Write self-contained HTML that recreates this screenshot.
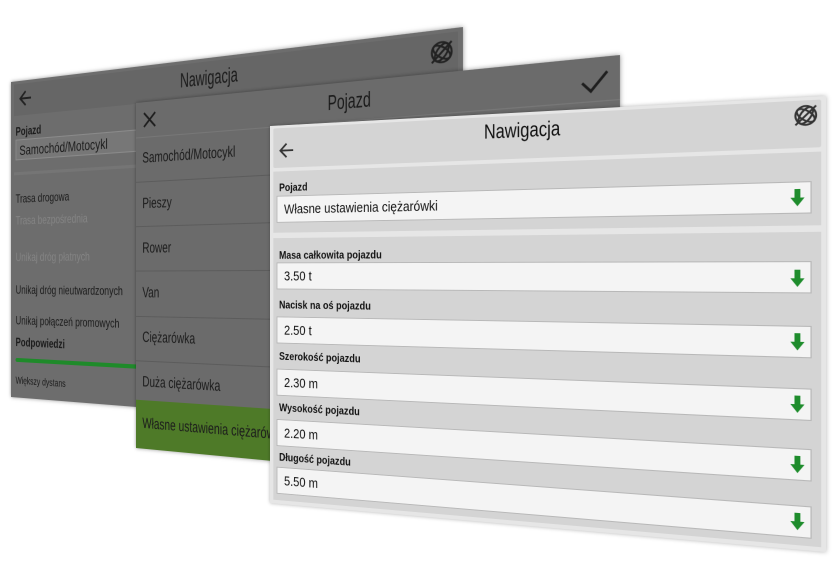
<!DOCTYPE html>
<html><head><meta charset="utf-8">
<style>
*{margin:0;padding:0;box-sizing:border-box}
html,body{width:838px;height:572px;background:#fff;overflow:hidden;font-family:"Liberation Sans",sans-serif}
.p{position:absolute;left:0;top:0;transform-origin:0 0;overflow:hidden}
.a{position:absolute;white-space:nowrap}
.c{transform:scaleX(.86);transform-origin:0 0}
.cc{transform:scaleX(.8);transform-origin:50% 0}
.s{display:inline-block;transform:scaleX(.88);transform-origin:0 0}
#p1{width:460px;height:320px;background:#6d6d6d;transform:matrix3d(0.75700,-0.132717,0,-0.00048726,0,0.984375,0,0,0,0,1,0,11,82,0,1);box-shadow:0 0 4px rgba(0,0,0,.4)}
#p2{width:480px;height:350px;background:#6b6b6b;transform:matrix3d(0.73175,-0.124542,0,-0.00044608,0,0.985714,0,0,0,0,1,0,136,103,0,1);box-shadow:0 0 4px rgba(0,0,0,.4)}
#p3{width:560px;height:420px;background:#e6e6e6;transform:matrix3d(0.73732,-0.083268,0,-0.00030938,0,0.897619,0,0,0,0,1,0,270,126,0,1);box-shadow:0 0 4px rgba(0,0,0,.3)}
.t1{font-size:12px;color:#1a1a1a;transform:scaleX(.85);transform-origin:0 0}
.dis{color:#858585}
.sep{position:absolute;left:0;right:0;height:1px;background:#5c5c5c}
.it{position:absolute;left:8px;font-size:15px;color:#1c1c1c;white-space:nowrap;transform:scaleX(.82);transform-origin:0 0}
.lab{position:absolute;left:11px;font-size:12px;font-weight:bold;color:#111;white-space:nowrap;transform:scaleX(.88);transform-origin:0 0}
.inp{position:absolute;left:8px;width:540px;height:30px;background:#f4f4f4;border:1px solid #b8b8b8;font-size:15px;color:#111;padding:6px 0 0 8px;white-space:nowrap}
.arr{position:absolute;left:530px;width:12px;height:16px}
</style></head><body>

<div id="p1" class="p">
  <div style="position:absolute;left:4px;right:4px;top:3px;height:32px;background:#666"></div>
  <svg class="a" style="left:10px;top:9px" width="18" height="18" viewBox="0 0 18 18"><path d="M16 9H3M9 2L2 9l7 7" stroke="#222" stroke-width="2" fill="none"/></svg>
  <div class="a" style="left:0;width:460px;text-align:center;top:8px;font-size:18px;color:#1a1a1a;transform:scaleX(.72);transform-origin:50% 0">Nawigacja</div>
  <svg class="a" style="left:432px;top:7px" width="22" height="22" viewBox="0 0 22 22"><g stroke="#222" stroke-width="1.6" fill="none"><circle cx="11" cy="11" r="8"/><ellipse cx="11" cy="11" rx="4" ry="8" transform="rotate(35 11 11)"/><ellipse cx="11" cy="11" rx="8" ry="4" transform="rotate(35 11 11)"/><path d="M3 19L19 3"/></g></svg>
  <div class="a t1" style="left:6px;top:44px;font-weight:bold">Pojazd</div>
  <div class="a" style="left:6px;top:59px;width:440px;height:21px;background:#777;border:1px solid #8a8a8a;font-size:14px;color:#1a1a1a;padding:2px 0 0 4px"><span class="s" style="transform:scaleX(.86)">Samochód/Motocykl</span></div>
  <div style="position:absolute;left:4px;right:4px;top:92px;height:3px;background:#757575"></div>
  <div class="a t1" style="left:6px;top:112px">Trasa drogowa</div>
  <div class="a t1 dis" style="left:6px;top:134px">Trasa bezpośrednia</div>
  <div class="a t1 dis" style="left:6px;top:171px">Unikaj dróg płatnych</div>
  <div class="a t1" style="left:6px;top:204px">Unikaj dróg nieutwardzonych</div>
  <div class="a t1" style="left:6px;top:235px">Unikaj połączeń promowych</div>
  <div class="a t1" style="left:6px;top:257px;font-weight:bold">Podpowiedzi</div>
  <div style="position:absolute;left:6px;width:420px;top:280px;height:4px;border-radius:2px;background:#1f8a2a"></div>
  <div class="a" style="left:6px;top:298px;font-size:10px;color:#1a1a1a;transform:scaleX(.85);transform-origin:0 0">Większy dystans</div>
</div>

<div id="p2" class="p">
  <svg class="a" style="left:8px;top:9px" width="18" height="18" viewBox="0 0 18 18"><path d="M2 2L16 16M16 2L2 16" stroke="#1e1e1e" stroke-width="2"/></svg>
  <div class="a" style="left:0;width:480px;text-align:center;top:8px;font-size:19px;color:#1a1a1a;transform:scaleX(.75);transform-origin:50% 0">Pojazd</div>
  <svg class="a" style="left:448px;top:10px" width="24" height="20" viewBox="0 0 24 20"><path d="M2 10l7 7L22 2" stroke="#1e1e1e" stroke-width="2.2" fill="none"/></svg>
  <div class="sep" style="top:35px;background:#777"></div>
  <div class="it" style="top:48px">Samochód/Motocykl</div>
  <div class="sep" style="top:80px"></div>
  <div class="it" style="top:94px">Pieszy</div>
  <div class="sep" style="top:125px"></div>
  <div class="it" style="top:139px">Rower</div>
  <div class="sep" style="top:170px"></div>
  <div class="it" style="top:184px">Van</div>
  <div class="sep" style="top:216px"></div>
  <div class="it" style="top:229px">Ciężarówka</div>
  <div class="sep" style="top:261px"></div>
  <div class="it" style="top:274px">Duża ciężarówka</div>
  <div style="position:absolute;left:0;right:0;top:301px;bottom:0;background:#4e7a28"></div>
  <div class="it" style="top:316px">Własne ustawienia ciężarówki</div>
</div>

<div id="p3" class="p">
  <div style="position:absolute;left:4px;right:4px;top:3px;height:44px;background:#d4d4d4;border-radius:2px"></div>
  <svg class="a" style="left:10px;top:18px" width="20" height="20" viewBox="0 0 20 20"><path d="M18 10H3M10 2.5L2.5 10l7.5 7.5" stroke="#333" stroke-width="2" fill="none"/></svg>
  <div class="a" style="left:0;width:560px;text-align:center;top:7px;font-size:21px;color:#111;transform:scaleX(.8);transform-origin:50% 0">Nawigacja</div>
  <svg class="a" style="left:531px;top:5px" width="24" height="24" viewBox="0 0 22 22"><g stroke="#333" stroke-width="1.6" fill="none"><circle cx="11" cy="11" r="8"/><ellipse cx="11" cy="11" rx="4" ry="8" transform="rotate(35 11 11)"/><ellipse cx="11" cy="11" rx="8" ry="4" transform="rotate(35 11 11)"/><path d="M3 19L19 3"/></g></svg>
  <div style="position:absolute;left:4px;right:4px;top:51px;height:68px;background:#d4d4d4"></div>
  <div class="lab" style="top:62px">Pojazd</div>
  <div class="inp" style="top:78px"><span class="s">Własne ustawienia ciężarówki</span></div>
  <div style="position:absolute;left:4px;right:4px;top:125px;bottom:4px;background:#d4d4d4"></div>
  <div class="lab" style="top:137px">Masa całkowita pojazdu</div>
  <div class="inp" style="top:152px"><span class="s">3.50 t</span></div>
  <div class="lab" style="top:192px">Nacisk na oś pojazdu</div>
  <div class="inp" style="top:212px"><span class="s">2.50 t</span></div>
  <div class="lab" style="top:249px">Szerokość pojazdu</div>
  <div class="inp" style="top:270px"><span class="s">2.30 m</span></div>
  <div class="lab" style="top:306px">Wysokość pojazdu</div>
  <div class="inp" style="top:326px"><span class="s">2.20 m</span></div>
  <div class="lab" style="top:361px">Długość pojazdu</div>
  <div class="inp" style="top:379px"><span class="s">5.50 m</span></div>
  <svg class="arr" style="top:85px" viewBox="0 0 12 16"><path d="M3.5 0h5v8h3.5L6 16 0 8h3.5z" fill="#1e8c2c"/></svg>
  <svg class="arr" style="top:160px" viewBox="0 0 12 16"><path d="M3.5 0h5v8h3.5L6 16 0 8h3.5z" fill="#1e8c2c"/></svg>
  <svg class="arr" style="top:219px" viewBox="0 0 12 16"><path d="M3.5 0h5v8h3.5L6 16 0 8h3.5z" fill="#1e8c2c"/></svg>
  <svg class="arr" style="top:277px" viewBox="0 0 12 16"><path d="M3.5 0h5v8h3.5L6 16 0 8h3.5z" fill="#1e8c2c"/></svg>
  <svg class="arr" style="top:333px" viewBox="0 0 12 16"><path d="M3.5 0h5v8h3.5L6 16 0 8h3.5z" fill="#1e8c2c"/></svg>
  <svg class="arr" style="top:386px" viewBox="0 0 12 16"><path d="M3.5 0h5v8h3.5L6 16 0 8h3.5z" fill="#1e8c2c"/></svg>
</div>
</body></html>
